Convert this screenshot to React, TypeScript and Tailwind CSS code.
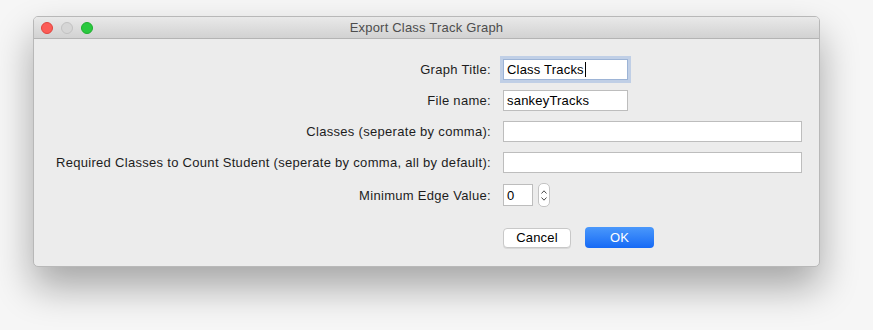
const font = { fontFamily: '"Liberation Sans", Arial, sans-serif' }

const Field = ({ width, value, focused = false, caret = false }: { width: string; value?: string; focused?: boolean; caret?: boolean }) => (
    <div
        className={`${width} h-[21px] bg-white border flex items-center pl-[3px] text-[13px] tracking-[0.2px] text-black leading-none ${focused ? 'border-[#9db4d6] shadow-[0_0_0_3px_rgba(128,164,222,0.4)]' : 'border-[#bdbdbd]'}`}
    >
        {value && <span>{value}</span>}
        {caret && <span className="w-px h-[15px] bg-black ml-px" />}
    </div>
)

const Stepper = () => (
    <div className="w-[12px] h-[24px] bg-white border border-[#c4c4c4] rounded-[5px] flex flex-col items-center justify-center gap-[3px]">
        <svg width="6" height="4" viewBox="0 0 6 4" fill="none">
            <path d="M0.5 3.5 L3 0.8 L5.5 3.5" stroke="#4a4a4a" strokeWidth="1" />
        </svg>
        <svg width="6" height="4" viewBox="0 0 6 4" fill="none">
            <path d="M0.5 0.5 L3 3.2 L5.5 0.5" stroke="#4a4a4a" strokeWidth="1" />
        </svg>
    </div>
)

const Label = ({ text }: { text: string }) => (
    <span className="text-right text-[13px] tracking-[0.3px] text-[#1d1d1d] leading-none self-center">{text}</span>
)

const App = () => {
    return (
        <div className="w-[873px] h-[330px] bg-[#f6f6f6] pl-[33px] pt-[16px]" style={font}>
            <div className="w-[787px] h-[251px] rounded-[5px] border border-[#b8b8b8] bg-[#ececec] shadow-[0_20px_38px_rgba(0,0,0,0.33)] overflow-hidden flex flex-col">
                <div className="h-[22px] bg-gradient-to-b from-[#e9e9e9] to-[#d2d2d2] border-b border-[#b4b4b4] flex items-center relative">
                    <div className="flex gap-[8px] pl-[7px]">
                        <span className="w-[12px] h-[12px] rounded-full bg-[#fc5c57] border border-[#e0443e]" />
                        <span className="w-[12px] h-[12px] rounded-full bg-[#d6d6d6] border border-[#c2c2c2]" />
                        <span className="w-[12px] h-[12px] rounded-full bg-[#2ac93f] border border-[#1eae2f]" />
                    </div>
                    <span className="absolute inset-0 flex items-center justify-center text-[13px] tracking-[0.2px] text-[#4d4d4d]">Export Class Track Graph</span>
                </div>
                <div className="pt-[20px] grid grid-cols-[457px_1fr] gap-x-[12px] gap-y-[10px]">
                    <Label text="Graph Title:" />
                    <Field width="w-[125px]" value="Class Tracks" focused caret />
                    <Label text="File name:" />
                    <Field width="w-[125px]" value="sankeyTracks" />
                    <Label text="Classes (seperate by comma):" />
                    <Field width="w-[299px]" />
                    <Label text="Required Classes to Count Student (seperate by comma, all by default):" />
                    <Field width="w-[299px]" />
                    <Label text="Minimum Edge Value:" />
                    <div className="flex items-center gap-[5px]">
                        <Field width="w-[30px] h-[22px]" value="0" />
                        <Stepper />
                    </div>
                    <div />
                    <div className="flex items-center gap-[14px] mt-[10px]">
                        <button className="w-[68px] h-[20px] bg-white border border-[#c8c8c8] rounded-[4px] text-[13px] tracking-[0.2px] text-black leading-none shadow-[0_1px_0_rgba(0,0,0,0.08)]">Cancel</button>
                        <button className="w-[69px] h-[21px] bg-gradient-to-b from-[#4a98fb] to-[#1569f5] rounded-[4px] text-[13px] tracking-[0.2px] text-white leading-none">OK</button>
                    </div>
                </div>
            </div>
        </div>
    )
}

export default App
